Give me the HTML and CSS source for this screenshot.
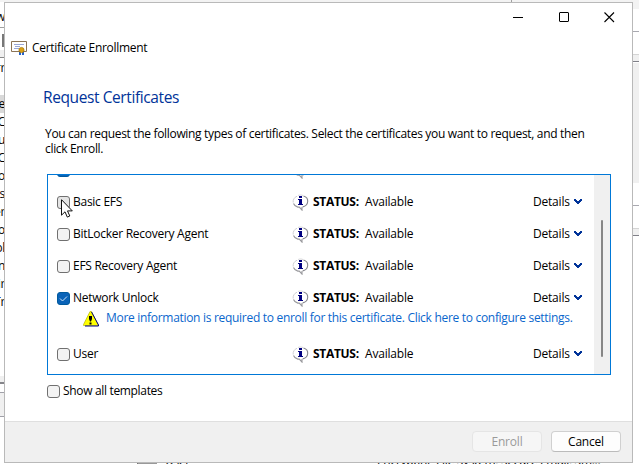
FILE: index.html
```html
<!DOCTYPE html>
<html lang="en">
<head>
<meta charset="utf-8">
<title>Certificate Enrollment</title>
<link rel="stylesheet" href="styles.css">
</head>
<body>
<svg class="defs" aria-hidden="true">
  <symbol id="info" viewBox="0 0 17 17">
    <path d="M5 2.200C2 3.500 .8 6 1.200 8.500" fill="none" stroke="#d0d0d4" stroke-width="1"/>
    <path d="M6 1.500C8 .8 9.500 .9 11 1.500" fill="none" stroke="#d8d8dc" stroke-width="1"/>
    <path d="M1.500 9.500c.7 1.900 2 3 4.300 3.600h1.500l2.700 3v-3" fill="none" stroke="#98989c" stroke-width="1.100"/>
    <path d="M11.500 2c3 .9 4.400 3.100 4.200 5.500-.2 2.700-2.200 4.700-5 5.400" fill="none" stroke="#85858c" stroke-width="1.100"/>
    <path d="M7 2h3v2H7zM6 5h4v5h1v1H6v-1h1V6H6z" fill="#000080"/>
  </symbol>
  <symbol id="chev" viewBox="0 0 8 6">
    <path d="M0 0h2v1h1v1h2V1h1V0h2v2H7v1H6v1H5v1H3V4H2V3H1V2H0z" fill="#003399"/>
  </symbol>
</svg>
<div class="desktop">
  <div class="left-strip">
    <span class="t menu">View</span>
    <i class="tool"></i>
    <i class="band"></i>
    <span class="t cur">Curr</span>
    <div class="tree">
      <span class="sel">Pe</span><span>&nbsp;C</span><span>Tru</span><span>&nbsp;C</span><span>Ento</span><span>Intermedis</span><span>Acter</span><span>TRo</span><span>Publ</span><span>Un</span><span>Thir</span><span>Tr</span>
    </div>
    <i class="base"></i><i class="base2"></i>
  </div>
  <div class="top-strip"></div>
  <div class="right-strip">
    <i class="r1"></i><i class="r2"></i><i class="r3"></i><i class="r4"></i><i class="r2"></i><i class="r3 last"></i>
  </div>
  <div class="bottom-strip"><i class="file"></i><span class="bu">User</span><span class="be">Encrypting File System, Secure Email, Sm...</span></div>
</div>

<main class="dialog">
  <header class="caption">
    <svg width="11" height="11"><path d="M0 5.500h10" stroke="#000"/></svg>
    <svg width="10" height="10"><rect x=".5" y=".5" width="9" height="9" rx=".5" fill="none" stroke="#000"/></svg>
    <svg width="11" height="11"><path d="M.5.5l9.500 9.500M10 .5L.5 10" stroke="#000" stroke-width="1.100"/></svg>
  </header>
  <div class="wizard">
    <svg class="cert" width="16" height="15" viewBox="0 0 16 15">
      <path d="M.5.5h15v10H.5z" fill="#fff" stroke="#8b7355"/>
      <path d="M3 3.500h10M4 5.500h5M3 7.500h5" stroke="#99a7d6"/>
      <path d="M8 10h2v4H8zM11 10h2v4h-2z" fill="#2460c8"/>
      <circle cx="10.500" cy="9" r="2.600" fill="#d9a017" stroke="#a87500" stroke-width=".7"/>
    </svg>
    <span>Certificate Enrollment</span>
  </div>
  <h1>Request Certificates</h1>
  <p>You can request the following types of certificates. Select the certificates you want to request, and then<br>click Enroll.</p>
  <section class="list">
    <div class="rows">
      <div class="row"><i class="box on"></i><span class="name"></span><svg class="info"><use href="#info"/></svg></div>
      <div class="row"><i class="box hover"></i><span class="name">Basic EFS</span><svg class="info"><use href="#info"/></svg><b>STATUS:</b><span class="av">Available</span><span class="det">Details</span><svg class="chev"><use href="#chev"/></svg></div>
      <div class="row"><i class="box"></i><span class="name">BitLocker Recovery Agent</span><svg class="info"><use href="#info"/></svg><b>STATUS:</b><span class="av">Available</span><span class="det">Details</span><svg class="chev"><use href="#chev"/></svg></div>
      <div class="row"><i class="box"></i><span class="name">EFS Recovery Agent</span><svg class="info"><use href="#info"/></svg><b>STATUS:</b><span class="av">Available</span><span class="det">Details</span><svg class="chev"><use href="#chev"/></svg></div>
      <div class="row"><i class="box on"><svg width="11" height="11"><path d="M2 5.500L4.500 8 9 3.500" fill="none" stroke="#cfe4f8"/></svg></i><span class="name">Network Unlock</span><svg class="info"><use href="#info"/></svg><b>STATUS:</b><span class="av">Available</span><span class="det">Details</span><svg class="chev"><use href="#chev"/></svg></div>
      <div class="more">
        <svg width="17" height="16" viewBox="0 0 17 16"><path d="M7 .5h1.500l6.500 13v1H.5v-1z" fill="#ff0" stroke="#a8a800" stroke-width=".6"/><path d="M8.500 1L15.500 14v1H2" fill="none" stroke="#000080" stroke-width="1"/><path d="M6 5h3v3L8 10.500H7L6 8zM6.500 11.500h2v2h-2z" fill="#000"/></svg>
        <span>More information is required to enroll for this certificate. Click here to configure settings.</span>
      </div>
      <div class="row"><i class="box"></i><span class="name">User</span><svg class="info"><use href="#info"/></svg><b>STATUS:</b><span class="av">Available</span><span class="det">Details</span><svg class="chev"><use href="#chev"/></svg></div>
    </div>
    <div class="scroll"><i></i></div>
  </section>
  <label class="all"><i class="box"></i><span>Show all templates</span></label>
  <footer><button class="off">Enroll</button><button>Cancel</button></footer>
</main>
<svg class="cursor" width="12" height="19" viewBox="0 0 12 19"><path d="M.5.7v15.500l3.500-3.400 2.300 5.300 2.500-1.100-2.300-5.100h4.800z" fill="#fff" stroke="#111"/></svg>
</body>
</html>
```
FILE: styles.css
```css
* { box-sizing: border-box; }
body { margin: 0; width: 639px; height: 464px; overflow: hidden; position: relative; background: #fff;
  font: 12px/16px "Open Sans", "Noto Sans", sans-serif; letter-spacing: -0.3px; color: #000; }
i { display: block; flex: none; }
svg { flex: none; display: block; }
span, b { white-space: nowrap; }
.defs { position: absolute; width: 0; height: 0; }

/* windows behind the dialog */
.desktop { position: absolute; inset: 0; }
.left-strip { position: absolute; left: 0; top: 0; width: 15px; height: 464px; display: flex; flex-direction: column; }
.left-strip span { display: flex; justify-content: flex-end; width: 5px; overflow: hidden; height: 18px; flex: none; line-height: 18px; }
.left-strip .menu { margin-top: 8px; height: 19px; }
.tool { height: 23px; border-top: 1px solid #a0a0a0; background: linear-gradient(#777, #777) 2px 6px / 3px 13px no-repeat; }
.band { height: 8px; background: #f0f0f0; border-bottom: 1px solid #888; }
.cur { margin-top: 1px; }
.tree { margin-top: 18px; }
.tree .sel { background: #d9d9d9; }
.base { margin-top: 65px; height: 8px; background: #f0f0f0; border-bottom: 2px solid #85858a; }
.base2 { margin-top: 8px; height: 25px; background: #f0f0f0; border: solid #a0a0a8; border-width: 1px 0; }
.top-strip { position: absolute; left: 0; top: 0; width: 639px; height: 2px; background: linear-gradient(#a0a0a0, #a0a0a0) 511px 0 / 1px 2px no-repeat #f3f3f3; }
.right-strip { position: absolute; left: 633px; top: 0; width: 6px; height: 464px; }
.r1 { height: 9px; background: #f3f3f3; }
.r2 { height: 23px; border-bottom: 1px solid #a9a9b0; }
.r3 { height: 30px; border-bottom: 1px solid #808088; background: linear-gradient(#fff 22px, #d4d4d4 22px, #d4d4d4 23px, #f0f0f0 23px); }
.r4 { height: 121px; background: #f0f0f0; border-top: 1px solid #fff; }
.bottom-strip { position: absolute; left: 133px; top: 453px; width: 470px; height: 11px; overflow: hidden; display: flex; }
.file { width: 20px; height: 11px; background: #999; margin: 0 8px 0 4px; border-left: 1px solid #777; }
.bu { width: 212px; }

.dialog { position: absolute; left: 4px; top: 2px; width: 629px; height: 461px; background: #fff; border: 1px solid #b9b9b9; display: flex; flex-direction: column; }
.caption { height: 29px; padding: 9px 17px 0 508px; display: flex; justify-content: space-between; flex: none; }
.wizard { height: 32px; padding-left: 6px; display: flex; align-items: center; gap: 5px; }
h1 { margin: 22px 0 0 38px; font-weight: 400; font-size: 15.5px; line-height: 22px; color: #039; letter-spacing: -0.4px; }
p { margin: 18px 0 0 40px; line-height: 15px; white-space: nowrap; letter-spacing: -0.325px; }
.list { width: 564px; height: 201px; margin: 18px 0 0 42px; border: 1px solid #0078d7; display: flex; overflow: hidden; flex: none; }
.rows { width: 546px; margin-top: -21px; padding-left: 9px; }
.row { height: 32px; display: flex; align-items: center; }
.box { width: 13px; height: 13px; border: 1px solid #707070; border-radius: 3px; background: #f3f3f3; }
.box.on { background: #0a63b8; border-color: #005a9e; }
.box.hover { background: #e5e5e5; }
.name { width: 222px; padding-left: 3px; letter-spacing: -0.27px; }
.info { width: 17px; height: 17px; margin-right: 4px; }
.row b { width: 52px; font-weight: 700; }
.av { width: 168px; letter-spacing: -0.2px; }
.det { width: 41px; letter-spacing: -0.2px; }
.chev { width: 8px; height: 6px; }
.more { height: 24px; padding: 0 0 16px 26px; display: flex; align-items: flex-start; gap: 6px; color: #0a66cc; }
.more svg { margin-top: -3px; }
.more span { margin-top: -4px; }
.scroll { width: 16px; background: #f0f0f0; padding: 45px 0 0 7px; }
.scroll i { width: 2px; height: 137px; background: #868686; border-radius: 1px; }
.all { display: flex; align-items: center; height: 16px; margin: 8px 0 0 42px; gap: 3px; letter-spacing: -0.33px; }
footer { margin-top: auto; height: 41px; background: #f0f0f0; border-top: 1px solid #dfdfdf; display: flex; justify-content: flex-end; gap: 9px; padding: 9px 11px 0 0; }
button { width: 70px; height: 21px; padding: 0; font: inherit; letter-spacing: -0.2px; line-height: 18px; background: #fdfdfd; border: 1px solid #d0d0d0; border-bottom-color: #bbb; border-radius: 4px; color: #000; }
.off { color: #9a9a9a; background: #f6f6f6; border-color: #e5e5e5; }
.cursor { position: absolute; left: 61px; top: 199px; }
```
